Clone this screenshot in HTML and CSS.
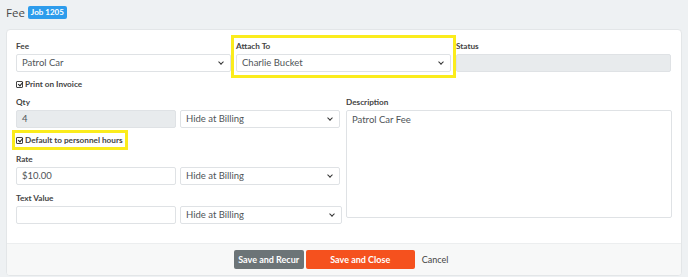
FILE: index.html
```html
<!DOCTYPE html>
<html>
  <head>
    <title>Fee</title>
    <link rel="stylesheet" href="styles.css">
  </head>
  <body>
    <div class="page-title">
      <span class="title-text">Fee</span>
      <span class="badge">Job 1205</span>
    </div>
    <div class="card">
      <div class="card-body">
        <div class="row-three">
          <div class="field">
            <label class="lbl">Fee</label>
            <div class="select">Patrol Car <span class="caret"></span></div>
          </div>
          <div class="field highlight hl-attach">
            <label class="lbl">Attach To</label>
            <div class="select">Charlie Bucket <span class="caret"></span></div>
          </div>
          <div class="field">
            <label class="lbl">Status</label>
            <div class="input disabled"></div>
          </div>
        </div>

        <div class="check-row">
          <span class="check"></span>
          <span class="check-label">Print on Invoice</span>
        </div>

        <div class="row-two">
          <div class="left-col">
            <label class="lbl">Qty</label>
            <div class="pair">
              <div class="input disabled">4</div>
              <div class="select">Hide at Billing <span class="caret"></span></div>
            </div>

            <div class="check-row small-gap">
              <div class="highlight hl-default">
                <span class="check"></span>
                <span class="check-label">Default to personnel hours</span>
              </div>
            </div>

            <label class="lbl">Rate</label>
            <div class="pair">
              <div class="input">$10.00</div>
              <div class="select">Hide at Billing <span class="caret"></span></div>
            </div>

            <label class="lbl spaced">Text Value</label>
            <div class="pair">
              <div class="input"></div>
              <div class="select wide">Hide at Billing <span class="caret"></span></div>
            </div>
          </div>
          <div class="right-col">
            <label class="lbl">Description</label>
            <div class="textarea">Patrol Car Fee</div>
          </div>
        </div>
      </div>
      <div class="card-footer">
        <button class="btn btn-gray">Save and Recur</button>
        <button class="btn btn-orange">Save and Close</button>
        <button class="btn btn-link">Cancel</button>
      </div>
    </div>
  </body>
</html>
```

FILE: styles.css
```css
* {
  box-sizing: border-box;
}

body {
  margin: 0;
  background-color: #eef1f3;
  font-family: Lato, "Open Sans", sans-serif;
  color: #495057;
  width: 688px;
  height: 277px;
  overflow: hidden;
}

.page-title {
  display: flex;
  align-items: center;
  height: 24px;
  padding: 0 0 0 6px;
}

.title-text {
  font-family: "Open Sans", sans-serif;
  font-size: 11.5px;
  color: #4a4a4a;
  margin-right: 3px;
}

.badge {
  background-color: #2d9cec;
  color: #fff;
  font-size: 8px;
  font-weight: 700;
  padding: 1px 3px;
  border-radius: 2px;
  line-height: 11px;
}

.card {
  margin: 5px 6px 0 6px;
  background-color: #fff;
  border: 1px solid #e3e6e8;
  border-radius: 4px;
  overflow: hidden;
}

.card-body {
  padding: 11px 10px 19px 9px;
}

.lbl {
  display: block;
  font-size: 8.2px;
  font-weight: 700;
  color: #444;
  line-height: 11px;
  margin-bottom: 2px;
}

.lbl.spaced {
  margin-top: 8px;
}

.row-three {
  display: grid;
  grid-template-columns: 215px 215px 215px;
  column-gap: 5px;
}

.field {
  position: relative;
}

.select,
.input {
  position: relative;
  height: 18px;
  border: 1px solid #dfe2e5;
  border-radius: 2px;
  background-color: #fff;
  font-size: 9.5px;
  line-height: 16px;
  padding: 0 5px;
  color: #4f5458;
}

.input.disabled {
  background-color: #e8ebed;
}

.caret {
  position: absolute;
  right: 7px;
  top: 5px;
  width: 4px;
  height: 4px;
  border-right: 1.3px solid #333;
  border-bottom: 1.3px solid #333;
  transform: rotate(45deg);
}

.highlight {
  position: relative;
}

.highlight::after {
  content: "";
  position: absolute;
  border: 3px solid #fbec1c;
  pointer-events: none;
}

.hl-attach::after {
  left: -5px;
  right: -5px;
  top: -6px;
  bottom: -6px;
}

.hl-default {
  display: flex;
  align-items: center;
}

.hl-default::after {
  left: -4px;
  right: -5px;
  top: -5px;
  bottom: -5px;
}

.check-row {
  display: flex;
  align-items: center;
  height: 12px;
  margin: 6px 0 7px;
}

.check-row.small-gap {
  margin: 6px 0 8px;
}

.check {
  display: inline-block;
  width: 7px;
  height: 7px;
  border: 1px solid #444;
  border-radius: 1px;
  margin-right: 2px;
  position: relative;
}

.check::after {
  content: "";
  position: absolute;
  left: 1.5px;
  top: -0.5px;
  width: 2px;
  height: 4px;
  border-right: 1px solid #222;
  border-bottom: 1px solid #222;
  transform: rotate(40deg);
}

.check-label {
  font-size: 8.2px;
  font-weight: 700;
  color: #444;
}

.row-two {
  display: grid;
  grid-template-columns: 324px 326px;
  column-gap: 6px;
}

.pair {
  display: grid;
  grid-template-columns: 160px 160px;
  column-gap: 4px;
}

.pair .select.wide {
  width: 162px;
}

.textarea {
  height: 108px;
  border: 1px solid #dfe2e5;
  border-radius: 2px;
  font-size: 9.5px;
  padding: 3px 5px;
  color: #4f5458;
}

.card-footer {
  background-color: #f7f8f8;
  border-top: 1px solid #eceeef;
  height: 32px;
  display: flex;
  justify-content: center;
  align-items: center;
  padding-right: 6px;
}

.btn {
  font-family: Lato, "Open Sans", sans-serif;
  font-size: 9px;
  font-weight: 700;
  border: none;
  border-radius: 2px;
  height: 19px;
  padding: 0;
  color: #fff;
  cursor: pointer;
}

.btn-gray {
  background-color: #6c7477;
  width: 70px;
  margin-right: 2px;
}

.btn-orange {
  background-color: #f5511e;
  width: 109px;
  margin-right: 7px;
}

.btn-link {
  background: none;
  color: #444;
  font-weight: 400;
  width: auto;
}
```
